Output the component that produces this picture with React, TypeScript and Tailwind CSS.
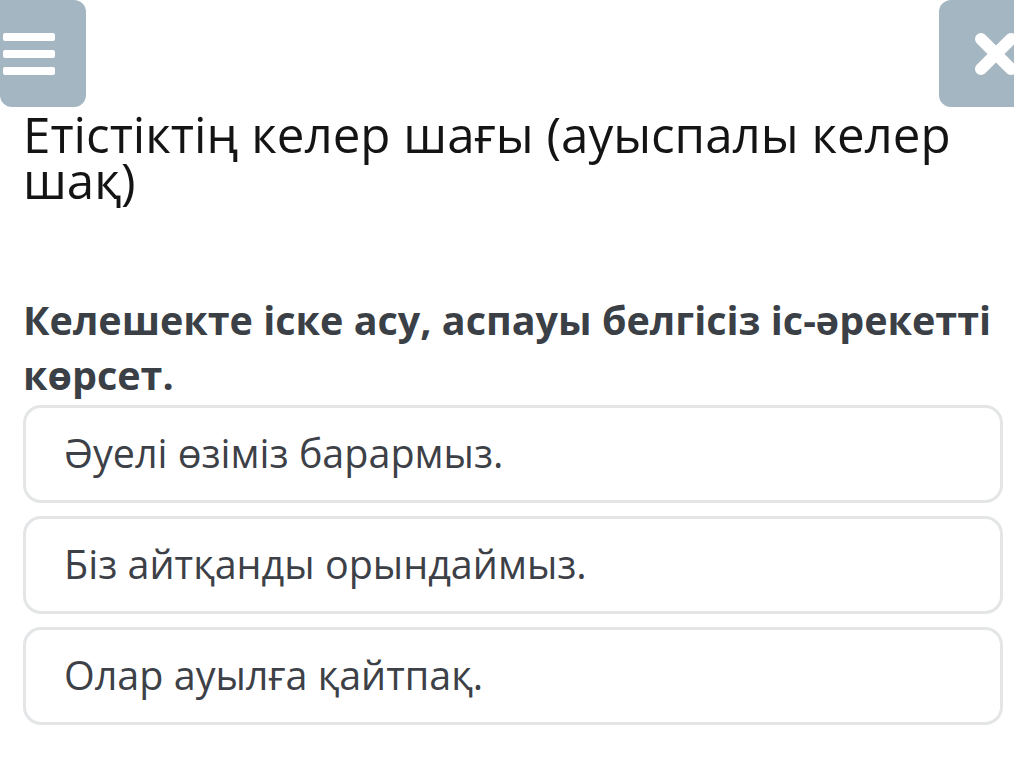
const font = { fontFamily: '"Open Sans", "Noto Sans", sans-serif' };

function MenuButton() {
  return (
    <div className="h-[107px] w-[86px] rounded-b-[12px] rounded-tr-[12px] bg-[#a3b6c2] flex flex-col justify-center gap-[9px] pl-[3px]">
      <div className="h-[8px] w-[52px] rounded-[2px] bg-white" />
      <div className="h-[8px] w-[52px] rounded-[2px] bg-white" />
      <div className="h-[8px] w-[52px] rounded-[2px] bg-white" />
    </div>
  );
}

function CloseButton() {
  return (
    <div className="h-[107px] w-[90px] -mr-[15px] rounded-bl-[12px] rounded-tl-[12px] bg-[#a3b6c2] flex items-center pl-[34px]">
      <svg width="46" height="46" viewBox="0 0 46 46">
        <path d="M8 8 L38 38 M38 8 L8 38" stroke="white" strokeWidth="12" strokeLinecap="round" />
      </svg>
    </div>
  );
}

const options = ['Әуелі өзіміз барармыз.', 'Біз айтқанды орындаймыз.', 'Олар ауылға қайтпақ.'];

export default function App() {
  return (
    <div className="w-[1014px] h-[769px] bg-white overflow-hidden" style={font}>
      <div className="flex justify-between">
        <MenuButton />
        <CloseButton />
      </div>
      <h1 className="px-[23px] mt-[4px] text-[49.3px] leading-[46px] text-[#141414] font-normal">
        Етістіктің келер шағы (ауыспалы келер шақ)
      </h1>
      <p className="pl-[23px] pr-[10px] mt-[90px] text-[39.5px] leading-[55px] font-bold text-[#3b3f46]">
        Келешекте іске асу, аспауы белгісіз іс-әрекетті көрсет.
      </p>
      <div className="flex flex-col gap-[13px] pl-[23px] pr-[11px] mt-[2px]">
        {options.map((o) => (
          <div
            key={o}
            className="h-[98px] rounded-[18px] border-[3px] border-[#e3e5e6] flex items-center pl-[38px] text-[39.5px] text-[#3d4147]"
          >
            {o}
          </div>
        ))}
      </div>
    </div>
  );
}
